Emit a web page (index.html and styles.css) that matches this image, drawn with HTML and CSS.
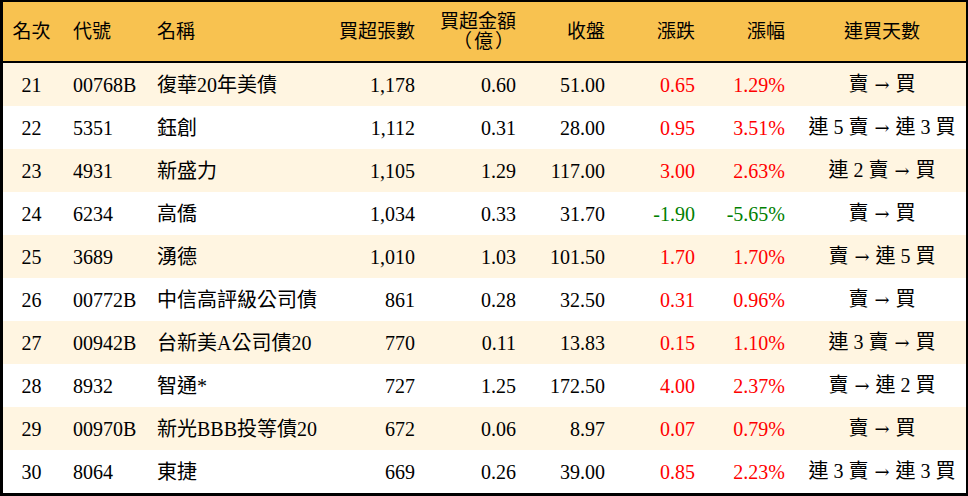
FILE: index.html
```html
<!DOCTYPE html>
<html lang="zh-Hant">
<head>
<meta charset="utf-8">
<link rel="stylesheet" href="styles.css">
</head>
<body>
<table class="rank">
<colgroup>
<col class="c1"><col class="c2"><col class="c3"><col class="c4"><col class="c5"><col class="c6"><col class="c7"><col class="c8"><col class="c9">
</colgroup>
<thead>
<tr>
<th class="ctr">名次</th>
<th class="lft">代號</th>
<th class="lft">名稱</th>
<th class="rgt">買超張數</th>
<th class="rgt">買超金額<br><span class="unit">（億）</span></th>
<th class="rgt">收盤</th>
<th class="rgt">漲跌</th>
<th class="rgt">漲幅</th>
<th class="ctr">連買天數</th>
</tr>
</thead>
<tbody>
<tr class="odd"><td class="ctr">21</td><td class="lft">00768B</td><td class="lft">復華20年美債</td><td class="rgt">1,178</td><td class="rgt">0.60</td><td class="rgt">51.00</td><td class="rgt up">0.65</td><td class="rgt up">1.29%</td><td class="ctr">賣 <span class="arr">→</span> 買</td></tr>
<tr><td class="ctr">22</td><td class="lft">5351</td><td class="lft">鈺創</td><td class="rgt">1,112</td><td class="rgt">0.31</td><td class="rgt">28.00</td><td class="rgt up">0.95</td><td class="rgt up">3.51%</td><td class="ctr">連 5 賣 <span class="arr">→</span> 連 3 買</td></tr>
<tr class="odd"><td class="ctr">23</td><td class="lft">4931</td><td class="lft">新盛力</td><td class="rgt">1,105</td><td class="rgt">1.29</td><td class="rgt">117.00</td><td class="rgt up">3.00</td><td class="rgt up">2.63%</td><td class="ctr">連 2 賣 <span class="arr">→</span> 買</td></tr>
<tr><td class="ctr">24</td><td class="lft">6234</td><td class="lft">高僑</td><td class="rgt">1,034</td><td class="rgt">0.33</td><td class="rgt">31.70</td><td class="rgt down">-1.90</td><td class="rgt down">-5.65%</td><td class="ctr">賣 <span class="arr">→</span> 買</td></tr>
<tr class="odd"><td class="ctr">25</td><td class="lft">3689</td><td class="lft">湧德</td><td class="rgt">1,010</td><td class="rgt">1.03</td><td class="rgt">101.50</td><td class="rgt up">1.70</td><td class="rgt up">1.70%</td><td class="ctr">賣 <span class="arr">→</span> 連 5 買</td></tr>
<tr><td class="ctr">26</td><td class="lft">00772B</td><td class="lft">中信高評級公司債</td><td class="rgt">861</td><td class="rgt">0.28</td><td class="rgt">32.50</td><td class="rgt up">0.31</td><td class="rgt up">0.96%</td><td class="ctr">賣 <span class="arr">→</span> 買</td></tr>
<tr class="odd"><td class="ctr">27</td><td class="lft">00942B</td><td class="lft">台新美A公司債20</td><td class="rgt">770</td><td class="rgt">0.11</td><td class="rgt">13.83</td><td class="rgt up">0.15</td><td class="rgt up">1.10%</td><td class="ctr">連 3 賣 <span class="arr">→</span> 買</td></tr>
<tr><td class="ctr">28</td><td class="lft">8932</td><td class="lft">智通*</td><td class="rgt">727</td><td class="rgt">1.25</td><td class="rgt">172.50</td><td class="rgt up">4.00</td><td class="rgt up">2.37%</td><td class="ctr">賣 <span class="arr">→</span> 連 2 買</td></tr>
<tr class="odd"><td class="ctr">29</td><td class="lft">00970B</td><td class="lft">新光BBB投等債20</td><td class="rgt">672</td><td class="rgt">0.06</td><td class="rgt">8.97</td><td class="rgt up">0.07</td><td class="rgt up">0.79%</td><td class="ctr">賣 <span class="arr">→</span> 買</td></tr>
<tr><td class="ctr">30</td><td class="lft">8064</td><td class="lft">東捷</td><td class="rgt">669</td><td class="rgt">0.26</td><td class="rgt">39.00</td><td class="rgt up">0.85</td><td class="rgt up">2.23%</td><td class="ctr">連 3 賣 <span class="arr">→</span> 連 3 買</td></tr>
</tbody>
</table>
</body>
</html>
```
FILE: styles.css
```css
html, body {
  margin: 0;
  padding: 0;
  background: #ffffff;
}
.rank {
  width: 968px;
  table-layout: fixed;
  border-collapse: separate;
  border-spacing: 0;
  border-style: solid;
  border-color: #000;
  border-width: 2px 2px 3px 3px;
  font-family: "Liberation Serif", "Noto Sans CJK TC", serif;
  font-size: 20px;
  line-height: 20px;
  color: #000;
}
.c1 { width: 57px; }
.c2 { width: 84px; }
.c3 { width: 184px; }
.c4 { width: 100px; }
.c5 { width: 101px; }
.c6 { width: 89px; }
.c7 { width: 90px; }
.c8 { width: 90px; }
.c9 { width: 168px; }
.rank th {
  background: #f8c250;
  height: 59px;
  padding: 0;
  font-weight: normal;
  border-bottom: 2px solid #000;
  vertical-align: middle;
  font-size: 19px;
}
.unit {
  letter-spacing: 2px;
}
.rank td {
  height: 43px;
  padding: 0;
  vertical-align: middle;
  white-space: nowrap;
}
.rank tr.odd td {
  background: #fff5e1;
}
.ctr { text-align: center; }
.lft { text-align: left; padding-left: 13px !important; }
.rgt { text-align: right; padding-right: 13px !important; }
.up { color: #ff0000; }
.down { color: #008000; }
.arr {
  font-family: "DejaVu Serif", serif;
  font-size: 18px;
  margin: 0 1px;
}
```
